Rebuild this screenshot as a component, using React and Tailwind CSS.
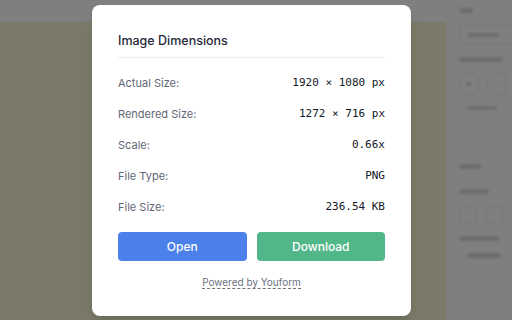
export default function App() {
  const rows = [
    ["Actual Size:", "1920 × 1080 px"],
    ["Rendered Size:", "1272 × 716 px"],
    ["Scale:", "0.66x"],
    ["File Type:", "PNG"],
    ["File Size:", "236.54 KB"],
  ]

  return (
    <div className="relative w-[512px] h-[320px] overflow-hidden flex bg-white" style={{ fontFamily: "Inter, 'Noto Sans', sans-serif" }}>
      {/* page behind the backdrop */}
      <div className="flex-1 flex flex-col">
        <div className="h-[22px] bg-white" />
        <div className="flex-1 bg-[#f6f4d2]" />
      </div>
      <div className="w-[66px] bg-white border-l border-[#f0f0f0] flex flex-col gap-3 pt-2 pl-3 blur-[1.5px]">
        <div className="h-[5px] w-[14px] bg-[#d8d8d8] rounded" />
        <div className="h-[20px] w-[60px] rounded border border-[#e5e5e5] flex items-center pl-2">
          <div className="h-[4px] w-[30px] bg-[#d8d8d8]" />
        </div>
        <div className="h-[5px] w-[44px] bg-[#d8d8d8] rounded" />
        <div className="flex gap-2 items-center">
          <div className="h-[20px] w-[20px] rounded border border-[#e5e5e5] flex items-center justify-center">
            <div className="w-[4px] h-[4px] bg-[#c8c8c8] rounded-full" />
          </div>
          <div className="h-[20px] w-[20px] rounded border border-[#e5e5e5]" />
        </div>
        <div className="h-[4px] w-[30px] bg-[#dcdcdc] rounded ml-2" />
        <div className="h-[30px]" />
        <div className="h-[5px] w-[22px] bg-[#d8d8d8] rounded" />
        <div className="h-[5px] w-[30px] bg-[#dadada] rounded mt-2" />
        <div className="flex gap-2 items-center">
          <div className="h-[18px] w-[18px] rounded border border-[#e5e5e5]" />
          <div className="h-[18px] w-[18px] rounded border border-[#e5e5e5]" />
        </div>
        <div className="h-[5px] w-[40px] bg-[#d8d8d8] rounded" />
        <div className="h-[5px] w-[34px] bg-[#d8d8d8] rounded ml-2" />
      </div>

      {/* backdrop */}
      <div className="absolute inset-0 bg-black/50" />

      {/* modal */}
      <div className="absolute left-[92px] top-[5px] w-[319px] h-[311px] bg-white rounded-lg shadow-lg px-[26px] pt-[28px] flex flex-col">
        <h2 className="text-[12.5px] font-medium text-[#1f2937] leading-[16px]">Image Dimensions</h2>
        <div className="mt-[8px] h-px bg-[#eceef1]" />
        <div className="flex flex-col mt-[17px] gap-[15px]">
          {rows.map(([label, value]) => (
            <div key={label} className="flex justify-between items-center h-[16px]">
              <span className="text-[11px] text-[#5f6675]">{label}</span>
              <span className="text-[11px] text-[#111827]" style={{ fontFamily: "'DejaVu Sans Mono', monospace" }}>{value}</span>
            </div>
          ))}
        </div>
        <div className="flex gap-[10px] mt-[17px]">
          <button className="flex-1 h-[29px] rounded bg-[#4c80ea] text-white text-[12px] font-medium">Open</button>
          <button className="flex-1 h-[29px] rounded bg-[#52b788] text-white text-[12px] font-medium">Download</button>
        </div>
        <div className="flex justify-center mt-[15px]">
          <span className="text-[10px] text-[#6b7280] border-b border-dashed border-[#6b7280] leading-[12px]">Powered by Youform</span>
        </div>
      </div>
    </div>
  )
}
